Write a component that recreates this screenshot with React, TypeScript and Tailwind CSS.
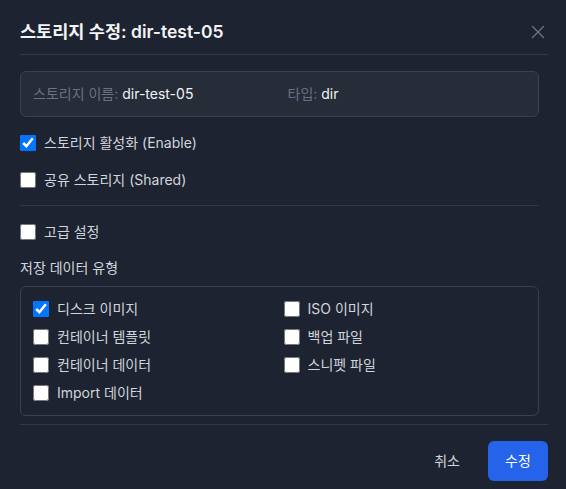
import { X } from "lucide-react";

const font = { fontFamily: 'Inter, "Noto Sans CJK KR", sans-serif' };

type DataType = { label: string; checked?: boolean };

const dataTypes: DataType[] = [
  { label: "디스크 이미지", checked: true },
  { label: "ISO 이미지" },
  { label: "컨테이너 템플릿" },
  { label: "백업 파일" },
  { label: "컨테이너 데이터" },
  { label: "스니펫 파일" },
  { label: "Import 데이터" },
];

function CheckRow({ label, checked }: { label: string; checked?: boolean }) {
  return (
    <label className="flex h-5 items-center gap-2 text-sm text-gray-300">
      <input type="checkbox" defaultChecked={checked} className="m-0 h-4 w-4" />
      <span>{label}</span>
    </label>
  );
}

export default function App() {
  return (
    <div className="h-[489px] w-[566px] bg-[#1d2330] text-white" style={font}>
      <div className="flex flex-col pl-5 pr-[18px]">
        <div className="flex items-center justify-between border-b border-[#323946] pb-2.5 pt-5">
          <h2 className="text-[17.5px] font-semibold leading-6 text-gray-100">
            스토리지 수정: dir-test-05
          </h2>
          <button className="mr-[-1px] text-gray-500">
            <X size={22} strokeWidth={1.5} />
          </button>
        </div>

        <div className="mr-[9px] flex flex-col pb-2 pt-4">
          <div className="grid grid-cols-2 gap-4 rounded-md border border-[#3a414e] bg-[#262c38] px-3 py-3 text-sm leading-5">
            <p>
              <span className="text-gray-500">스토리지 이름: </span>
              <span className="text-gray-100">dir-test-05</span>
            </p>
            <p>
              <span className="text-gray-500">타입: </span>
              <span className="text-gray-100">dir</span>
            </p>
          </div>

          <div className="mt-4">
            <CheckRow label="스토리지 활성화 (Enable)" checked />
          </div>
          <div className="mt-[17px]">
            <CheckRow label="공유 스토리지 (Shared)" />
          </div>

          <div className="mt-[15px] border-t border-[#323946]" />

          <div className="mt-4">
            <CheckRow label="고급 설정" />
          </div>

          <p className="mt-4 text-sm leading-5 text-gray-300">저장 데이터 유형</p>

          <div className="mt-2 grid grid-cols-2 gap-x-2 gap-y-2 rounded-md border border-[#3a414e] p-3">
            {dataTypes.map((t) => (
              <CheckRow key={t.label} label={t.label} checked={t.checked} />
            ))}
          </div>
        </div>

        <div className="flex items-center justify-end gap-4 border-t border-[#323946] pb-2 pt-4">
          <button className="px-3 text-sm text-gray-300">취소</button>
          <button className="h-10 w-[60px] rounded-md bg-[#2563eb] text-sm text-white">
            수정
          </button>
        </div>
      </div>
    </div>
  );
}
